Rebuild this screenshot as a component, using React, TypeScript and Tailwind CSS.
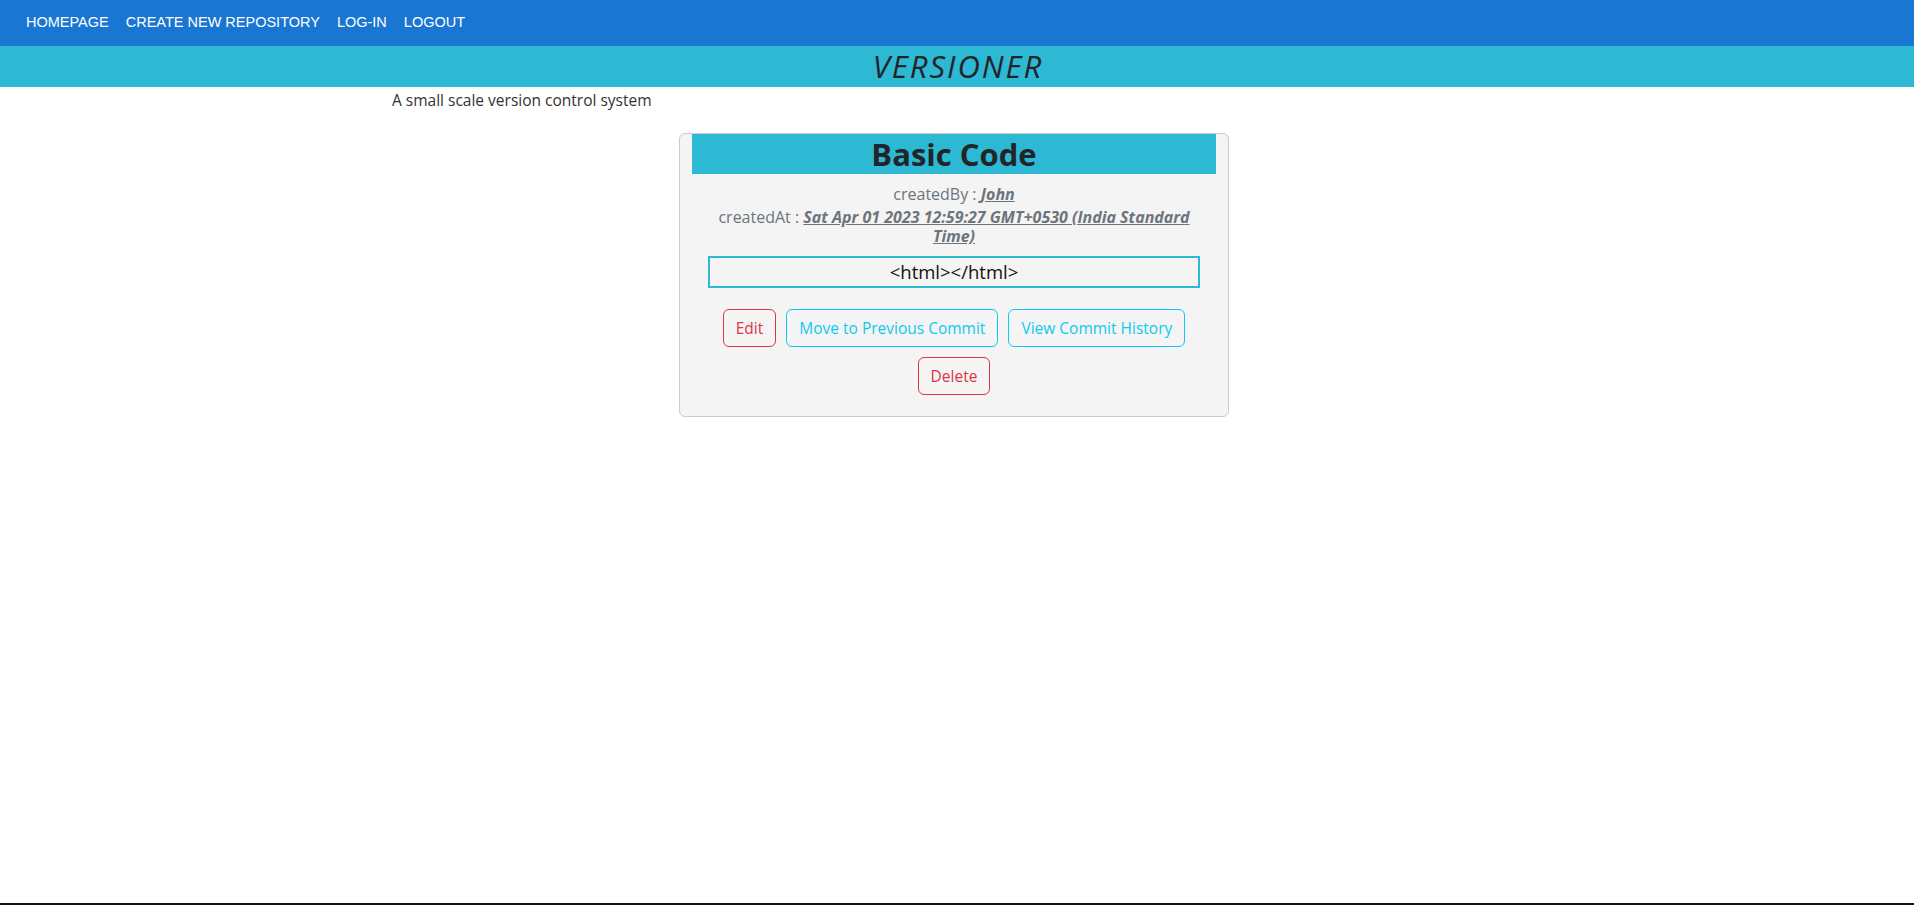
import React from "react";

export default function App() {
  return (
    <div className="min-h-[905px] flex flex-col bg-white font-['Open_Sans','Noto_Sans',sans-serif]">
      <nav className="h-[46px] shrink-0 bg-[#1976d2] flex items-center gap-[17px] pl-[26px] font-['Liberation_Sans',Arial,sans-serif] text-[14.5px] text-white">
        <a>HOMEPAGE</a>
        <a>CREATE NEW REPOSITORY</a>
        <a>LOG-IN</a>
        <a>LOGOUT</a>
      </nav>
      <div className="h-[41px] shrink-0 bg-[#2db8d3] flex items-center justify-center">
        <h1 className="italic font-medium text-[31px] leading-none text-[#212529] tracking-[2px] pl-[2px]">VERSIONER</h1>
      </div>
      <p className="pl-[392px] pt-[1px] text-[15.5px] leading-[24px] text-[#333]">A small scale version control system</p>
      <div className="pl-[679px] pt-[21px]">
        <div className="w-[550px] border border-[#cccccc] rounded-[6px] bg-[#f4f4f4] px-[12px] pb-[16px]">
          <div className="h-[40px] bg-[#2db8d3] flex items-center justify-center">
            <h2 className="font-bold text-[31px] leading-none text-[#212529]">Basic Code</h2>
          </div>
          <div className="mt-[10px] text-center text-[16px] leading-[20px] text-[#6c757d]">
            createdBy : <span className="font-bold italic underline">John</span>
          </div>
          <div className="mx-auto mt-[4px] w-[500px] text-center text-[16px] leading-[19px] text-[#6c757d]">
            createdAt : <span className="font-bold italic underline">Sat Apr 01 2023 12:59:27 GMT+0530 (India Standard Time)</span>
          </div>
          <div className="mx-[16px] mt-[10px] h-[32px] border-2 border-[#2db8d3] flex items-center justify-center text-[18.5px] text-[#111]">
            {"<html></html>"}
          </div>
          <div className="mt-[16px] flex flex-wrap justify-center">
            <button className="m-[5px] px-[12px] py-[6px] rounded-[6px] border border-[#dc3545] text-[#dc3545] text-[15.5px] leading-[24px]">Edit</button>
            <button className="m-[5px] px-[12px] py-[6px] rounded-[6px] border border-[#0dcaf0] text-[#0dcaf0] text-[15.5px] leading-[24px]">Move to Previous Commit</button>
            <button className="m-[5px] px-[12px] py-[6px] rounded-[6px] border border-[#0dcaf0] text-[#0dcaf0] text-[15.5px] leading-[24px]">View Commit History</button>
            <button className="m-[5px] px-[12px] py-[6px] rounded-[6px] border border-[#dc3545] text-[#dc3545] text-[15.5px] leading-[24px]">Delete</button>
          </div>
        </div>
      </div>
      <div className="mt-auto h-[2px] bg-[#1a1016]" />
    </div>
  );
}
